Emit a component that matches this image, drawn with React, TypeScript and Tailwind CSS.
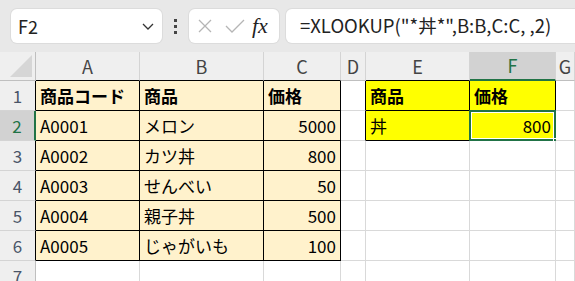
import React from "react";

const GRID = "#d9d9d9";
const BLACK = "#000000";
const GREEN = "#217346";

type CellProps = {
  text?: string;
  bg?: string;
  right?: string;
  bottom?: string;
  align?: "left" | "right";
  bold?: boolean;
  selected?: boolean;
};

function Cell({ text, bg = "#ffffff", right = GRID, bottom = GRID, align = "left", bold, selected }: CellProps) {
  return (
    <div
      className={`relative flex items-center border-r border-b px-[4px] text-[17px] leading-none text-black ${
        align === "right" ? "justify-end" : "justify-start"
      } ${bold ? "font-bold" : ""}`}
      style={{ backgroundColor: bg, borderRightColor: right, borderBottomColor: bottom }}
    >
      <span className="whitespace-nowrap">{text}</span>
      {selected && (
        <>
          <div className="pointer-events-none absolute -top-[1px] -left-[1px] -right-[1px] -bottom-[1px] border-2 border-[#217346]">
            <div className="h-full w-full border border-white" />
          </div>
          <div className="absolute -right-[4px] -bottom-[4px] h-[6px] w-[6px] border border-white bg-[#217346]" />
        </>
      )}
    </div>
  );
}

function ColHead({ label, active, bottom = "#bfbfbf" }: { label: string; active?: boolean; bottom?: string }) {
  return (
    <div
      className={`flex items-center justify-center border-r border-b text-[18px] ${
        active ? "bg-[#d2d2d2] text-[#217346]" : "bg-[#efefef] text-[#444444]"
      }`}
      style={{ borderRightColor: "#d4d4d4", borderBottomColor: active ? GREEN : bottom, borderBottomWidth: active ? 2 : 1 }}
    >
      {label}
    </div>
  );
}

function RowHead({ n, active, right = "#bfbfbf" }: { n: number; active?: boolean; right?: string }) {
  return (
    <div
      className={`flex items-center justify-center border-r border-b text-[17px] ${
        active ? "bg-[#d2d2d2] text-[#217346]" : "bg-[#efefef] text-[#4a5568]"
      }`}
      style={{ borderBottomColor: "#d4d4d4", borderRightColor: active ? GREEN : right, borderRightWidth: active ? 2 : 1 }}
    >
      {n}
    </div>
  );
}

const CREAM = "#fff2cc";
const YELLOW = "#ffff00";

const data: [string, string, string][] = [
  ["A0001", "メロン", "5000"],
  ["A0002", "カツ丼", "800"],
  ["A0003", "せんべい", "50"],
  ["A0004", "親子丼", "500"],
  ["A0005", "じゃがいも", "100"],
];

export default function App() {
  return (
    <div
      className="h-[281px] w-[575px] overflow-hidden bg-white"
      style={{ fontFamily: '"Noto Sans CJK JP", "Noto Sans", sans-serif' }}
    >
      {/* formula bar */}
      <div className="flex h-[52px] items-center bg-[#e8e8e8] pl-[11px]">
        <div className="flex h-[34px] w-[151px] items-center justify-between rounded-[6px] bg-white pr-[7px] pl-[7px] shadow-[0_0_0_1px_#dcdcdc]">
          <span className="text-[18px] text-[#222]">F2</span>
          <svg width="14" height="14" viewBox="0 0 14 14" fill="none" stroke="#333" strokeWidth="1.3">
            <path d="M2 5 L7 10 L12 5" />
          </svg>
        </div>
        <div className="flex w-[27px] flex-col items-center justify-center gap-[3px]">
          <div className="h-[3px] w-[3px] bg-[#444]" />
          <div className="h-[3px] w-[3px] bg-[#444]" />
          <div className="h-[3px] w-[3px] bg-[#444]" />
        </div>
        <div className="flex h-[34px] w-[90px] items-center rounded-[6px] bg-white pl-[8px] shadow-[0_0_0_1px_#dcdcdc]">
          <svg width="16" height="16" viewBox="0 0 16 16" stroke="#b5b5b5" strokeWidth="1.3">
            <path d="M2 2 L14 14 M14 2 L2 14" />
          </svg>
          <svg className="ml-[12px]" width="20" height="15" viewBox="0 0 20 15" fill="none" stroke="#b5b5b5" strokeWidth="1.3">
            <path d="M1 7 L7 13 L19 1" />
          </svg>
          <span
            className="ml-[7px] text-[22px] italic leading-none text-[#222]"
            style={{ fontFamily: '"Liberation Serif", "DejaVu Serif", serif' }}
          >
            fx
          </span>
        </div>
        <div className="ml-[7px] flex h-[34px] flex-1 items-center rounded-l-[6px] bg-white pl-[14px] shadow-[0_0_0_1px_#dcdcdc]">
          <span className="text-[18.5px] whitespace-nowrap text-[#222]">=XLOOKUP("*丼*",B:B,C:C, ,2)</span>
        </div>
      </div>

      {/* sheet */}
      <div className="grid grid-cols-[36px_104px_124px_77px_25px_104px_86px_1fr] grid-rows-[29px_30px_30px_30px_30px_30px_30px_30px]">
        <div className="relative border-r border-b border-[#bfbfbf] bg-[#efefef]">
          <svg className="absolute right-[3px] bottom-[3px]" width="22" height="22" viewBox="0 0 22 22">
            <path d="M22 0 L22 22 L0 22 Z" fill="#d6d6d6" />
          </svg>
        </div>
        <ColHead label="A" bottom={BLACK} />
        <ColHead label="B" bottom={BLACK} />
        <ColHead label="C" bottom={BLACK} />
        <ColHead label="D" />
        <ColHead label="E" bottom={BLACK} />
        <ColHead label="F" active />
        <ColHead label="G" />

        {/* row 1 */}
        <RowHead n={1} right={BLACK} />
        <Cell text="商品コード" bg={CREAM} right={BLACK} bottom={BLACK} bold />
        <Cell text="商品" bg={CREAM} right={BLACK} bottom={BLACK} bold />
        <Cell text="価格" bg={CREAM} right={BLACK} bottom={BLACK} bold />
        <Cell right={BLACK} />
        <Cell text="商品" bg={YELLOW} right={BLACK} bottom={BLACK} bold />
        <Cell text="価格" bg={YELLOW} right={BLACK} bottom={BLACK} bold />
        <Cell />

        {data.map(([code, name, price], i) => {
          const r = i + 2;
          return (
            <React.Fragment key={r}>
              <RowHead n={r} active={r === 2} right={BLACK} />
              <Cell text={code} bg={CREAM} right={BLACK} bottom={BLACK} />
              <Cell text={name} bg={CREAM} right={BLACK} bottom={BLACK} />
              <Cell text={price} bg={CREAM} right={BLACK} bottom={BLACK} align="right" />
              <Cell right={r === 2 ? BLACK : GRID} />
              {r === 2 ? (
                <>
                  <Cell text="丼" bg={YELLOW} right={BLACK} bottom={BLACK} />
                  <Cell text="800" bg={YELLOW} right={BLACK} bottom={BLACK} align="right" selected />
                </>
              ) : (
                <>
                  <Cell />
                  <Cell />
                </>
              )}
              <Cell />
            </React.Fragment>
          );
        })}

        <RowHead n={7} />
        <Cell />
        <Cell />
        <Cell />
        <Cell />
        <Cell />
        <Cell />
        <Cell />
      </div>
    </div>
  );
}
